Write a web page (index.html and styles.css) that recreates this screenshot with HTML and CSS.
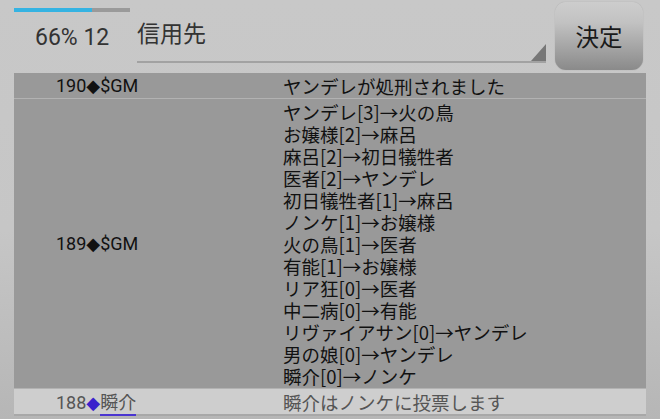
FILE: index.html
```html
<!DOCTYPE html>
<html lang="ja">
<head>
<meta charset="utf-8">
<link rel="stylesheet" href="styles.css">
</head>
<body>
<div class="header">
  <div class="status">
    <div class="progress"><div class="progress-fill" style="width:67%"></div></div>
    <div class="count">66% 12</div>
  </div>
  <div class="spinner">
    <span class="spinner-text">信用先</span>
    <span class="spinner-arrow"></span>
  </div>
  <button class="decide">決定</button>
</div>
<div class="log">
  <div class="row">
    <div class="who">190◆$GM</div>
    <div class="msg"><div class="line">ヤンデレが処刑されました</div></div>
  </div>
  <div class="row">
    <div class="who">189◆$GM</div>
    <div class="msg">
      <div class="line">ヤンデレ[3]→火の鳥</div>
      <div class="line">お嬢様[2]→麻呂</div>
      <div class="line">麻呂[2]→初日犠牲者</div>
      <div class="line">医者[2]→ヤンデレ</div>
      <div class="line">初日犠牲者[1]→麻呂</div>
      <div class="line">ノンケ[1]→お嬢様</div>
      <div class="line">火の鳥[1]→医者</div>
      <div class="line">有能[1]→お嬢様</div>
      <div class="line">リア狂[0]→医者</div>
      <div class="line">中二病[0]→有能</div>
      <div class="line">リヴァイアサン[0]→ヤンデレ</div>
      <div class="line">男の娘[0]→ヤンデレ</div>
      <div class="line">瞬介[0]→ノンケ</div>
    </div>
  </div>
  <div class="row row-light">
    <div class="who">188<span class="dia">◆</span><span class="link">瞬介</span></div>
    <div class="msg"><div class="line">瞬介はノンケに投票します</div></div>
  </div>
</div>
</body>
</html>
```
FILE: styles.css
```css
html, body {
  margin: 0;
  padding: 0;
}
body {
  width: 660px;
  height: 419px;
  overflow: hidden;
  background: linear-gradient(#c8c8c8 0%, #c6c6c6 55%, #b6b6b6 100%);
  font-family: Roboto, "DejaVu Sans", "Noto Sans CJK JP", sans-serif;
  color: #111;
}
.header {
  display: flex;
  height: 73px;
  padding-left: 14px;
  box-sizing: border-box;
}
.status {
  width: 123px;
  flex: none;
}
.progress {
  margin-top: 8px;
  width: 116px;
  height: 4px;
  background: #9a9a9a;
}
.progress-fill {
  height: 100%;
  background: #35b3e2;
}
.count {
  margin-top: 13px;
  margin-left: 21px;
  font-size: 23px;
  line-height: 26px;
  color: #333;
}
.spinner {
  position: relative;
  flex: 1;
  height: 61px;
  border-bottom: 2px solid #a2a2a2;
  margin-right: 9px;
}
.spinner-text {
  display: block;
  margin-top: 21px;
  font-family: "Noto Sans CJK JP", sans-serif;
  font-size: 23px;
  line-height: 23px;
  color: #333;
}
.spinner-arrow {
  position: absolute;
  right: 0;
  bottom: 0;
  width: 0;
  height: 0;
  border-left: 15px solid transparent;
  border-bottom: 17px solid #777;
}
.decide {
  flex: none;
  width: 88px;
  height: 68px;
  margin: 2px 17px 3px 0;
  border: 0;
  border-radius: 11px;
  background: linear-gradient(#cdcdcd 0%, #c2c2c2 30%, #8a8a8a 100%);
  box-shadow: 0 0 1px rgba(0,0,0,0.25);
  font-family: "Noto Sans CJK JP", sans-serif;
  font-size: 23.5px;
  color: #1a1a1a;
  padding: 0;
}
.log {
  margin: 0 14px;
  background: #999;
}
.row {
  display: grid;
  grid-template-columns: 269px 1fr;
  border-bottom: 1px solid #b2b2b2;
}
.who {
  align-self: center;
  padding-left: 42px;
  font-size: 18px;
  line-height: 22px;
}
.msg {
  padding: 2px 0 1px;
  font-family: "Noto Sans CJK JP", sans-serif;
  font-size: 18.5px;
}
.line {
  height: 22px;
  line-height: 22px;
  white-space: nowrap;
}
.row-light {
  background: #cecece;
  color: #555;
  border-bottom: 2px solid #a8a8a8;
}
.dia {
  color: #3a22cc;
}
.link {
  font-family: "Noto Sans CJK JP", sans-serif;
  font-size: 18px;
  border-bottom: 2px solid #4a35d0;
}
```
